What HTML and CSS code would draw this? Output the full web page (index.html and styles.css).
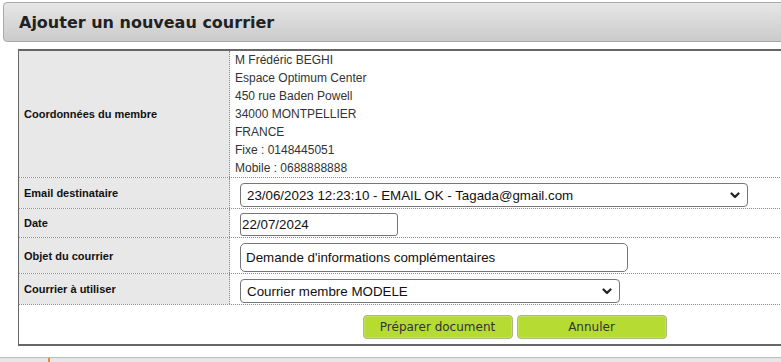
FILE: index.html
```html
<!DOCTYPE html>
<html lang="fr">
<head>
<meta charset="utf-8">
<title>Ajouter un nouveau courrier</title>
<link rel="stylesheet" href="styles.css">
</head>
<body>
<div class="page">
  <div class="titlebar"><h1 class="title">Ajouter un nouveau courrier</h1></div>
  <div class="form">
    <div class="row row-addr">
      <div class="label">Coordonnées du membre</div>
      <div class="value addr">
        <div>M Frédéric BEGHI</div>
        <div>Espace Optimum Center</div>
        <div>450 rue Baden Powell</div>
        <div>34000 MONTPELLIER</div>
        <div>FRANCE</div>
        <div>Fixe : 0148445051</div>
        <div>Mobile : 0688888888</div>
      </div>
    </div>
    <div class="row row-email">
      <div class="label">Email destinataire</div>
      <div class="value ctl">
        <div class="selwrap sel-email">
          <select class="select"><option>23/06/2023 12:23:10 - EMAIL OK - Tagada@gmail.com</option></select>
          <svg class="chev" width="10" height="7" viewBox="0 0 10 7"><path d="M1.5 1.5 L5 5 L8.5 1.5" fill="none" stroke="#222" stroke-width="2.2" stroke-linecap="round" stroke-linejoin="round"/></svg>
        </div>
      </div>
    </div>
    <div class="row row-date">
      <div class="label">Date</div>
      <div class="value ctl"><input class="input input-date" type="text" value="22/07/2024"></div>
    </div>
    <div class="row row-objet">
      <div class="label">Objet du courrier</div>
      <div class="value ctl"><input class="input input-objet" type="text" value="Demande d'informations complémentaires"></div>
    </div>
    <div class="row row-modele">
      <div class="label">Courrier à utiliser</div>
      <div class="value ctl">
        <div class="selwrap sel-modele">
          <select class="select"><option>Courrier membre MODELE</option></select>
          <svg class="chev" width="10" height="7" viewBox="0 0 10 7"><path d="M1.5 1.5 L5 5 L8.5 1.5" fill="none" stroke="#222" stroke-width="2.2" stroke-linecap="round" stroke-linejoin="round"/></svg>
        </div>
      </div>
    </div>
    <div class="actions">
      <button class="btn" type="button">Préparer document</button>
      <button class="btn" type="button">Annuler</button>
    </div>
  </div>
  <div class="footer"><span class="mark"></span></div>
</div>
</body>
</html>
```
FILE: styles.css
```css
html, body {
  margin: 0;
  padding: 0;
  background: #fff;
  overflow: hidden;
}
.page {
  width: 1020px;
  padding-top: 2px;
  font-family: "Liberation Sans", Arial, sans-serif;
  color: #222;
}
.titlebar {
  margin-left: 3px;
  height: 38px;
  border: 1px solid #a9a9a9;
  border-radius: 4px;
  background: linear-gradient(#e6e6e6, #cbcbcb);
  display: flex;
  align-items: center;
  padding-left: 15px;
}
.title {
  margin: 0;
  font-family: "DejaVu Sans", Verdana, sans-serif;
  font-size: 16px;
  font-weight: bold;
  color: #222;
}
.form {
  margin: 7px 0 11px 18px;
  width: 991px;
  border-top: 2px solid #666;
  border-bottom: 2px solid #666;
  border-left: 1px solid #666;
}
.row {
  display: grid;
  grid-template-columns: 211px 1fr;
  border-bottom: 1px dotted #8a8a8a;
}
.label {
  background: #e8e8e8;
  border-right: 1px dotted #8a8a8a;
  font-size: 11px;
  font-weight: bold;
  color: #111;
  padding-left: 5px;
  display: flex;
  align-items: center;
}
.value {
  min-width: 0;
}
.addr {
  padding-left: 5px;
  font-size: 12px;
  line-height: 18px;
  color: #333;
}
.row-addr { height: 126px; }
.row-email { height: 30px; }
.row-date { height: 28px; }
.row-objet { height: 35px; }
.row-modele { height: 30px; }
.ctl {
  padding: 5px 0 0 10px;
  box-sizing: border-box;
}
.row-date .ctl { padding-top: 4px; }
.selwrap {
  position: relative;
  height: 24px;
}
.sel-email { width: 508px; }
.sel-modele { width: 380px; }
.select {
  appearance: none;
  -webkit-appearance: none;
  display: block;
  width: 100%;
  height: 24px;
  margin: 0;
  box-sizing: border-box;
  border: 1px solid #767676;
  border-radius: 4px;
  background: #fff;
  padding: 0 24px 0 6px;
  font-family: "Liberation Sans", Arial, sans-serif;
  font-size: 13.33px;
  color: #111;
}
.chev {
  position: absolute;
  right: 8px;
  top: 9px;
}
.input {
  display: block;
  margin: 0;
  box-sizing: border-box;
  border: 1px solid #767676;
  background: #fff;
  font-family: "Liberation Sans", Arial, sans-serif;
  font-size: 13.33px;
  color: #111;
}
.input-date {
  width: 158px;
  height: 23px;
  border-radius: 3px;
  padding: 0 1px;
}
.input-objet {
  width: 388px;
  height: 29px;
  border-radius: 5px;
  padding: 0 5px;
}
.actions {
  height: 39px;
  display: flex;
  justify-content: center;
  align-items: flex-start;
  gap: 4px;
  padding-top: 10px;
  box-sizing: border-box;
}
.btn {
  width: 150px;
  height: 24px;
  margin: 0;
  border: 1px solid #a8b88a;
  border-radius: 4px;
  background: #b6dc34;
  box-shadow: inset 0 0 0 1px #c5e259;
  font-family: "DejaVu Sans", sans-serif;
  font-size: 12px;
  color: #333;
  padding: 0;
}
.footer {
  height: 20px;
  border-top: 1px solid #bbb;
  background: #e6e6e6;
  position: relative;
}
.mark {
  position: absolute;
  left: 48px;
  top: 0;
  width: 2px;
  height: 5px;
  background: #f08a24;
}
```
